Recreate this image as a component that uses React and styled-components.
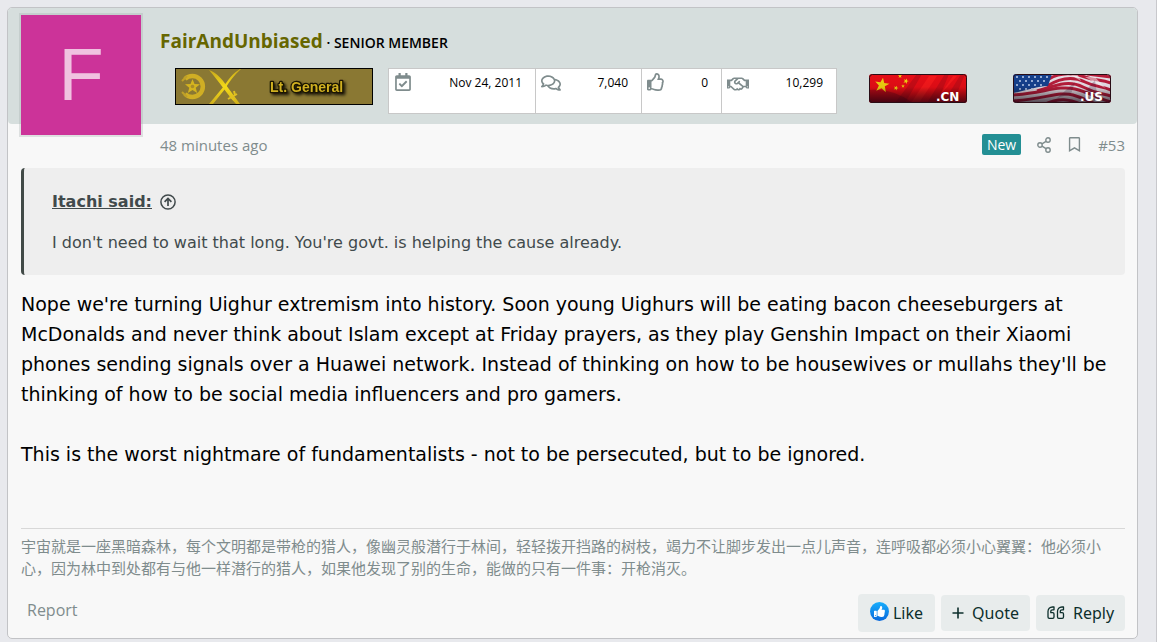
import React from "react";
import styled, { createGlobalStyle } from "styled-components";
import { FaRegCalendarCheck, FaRegComments, FaRegThumbsUp, FaRegHandshake, FaRegBookmark, FaThumbsUp } from "react-icons/fa";

const ui = '"Open Sans", "Noto Sans", sans-serif';
const verdana = 'Verdana, "DejaVu Sans", sans-serif';

const GlobalStyle = createGlobalStyle`
  * { box-sizing: border-box; }
  body { margin: 0; background: #e8e9ed; font-family: ${ui}; color: #000; }
  button { font: inherit; cursor: pointer; }
  a { color: inherit; text-decoration: none; }
  svg { display: block; flex: none; }
`;

const Page = styled.main`
  padding: 7px 18px 4px 7px;
  border-right: 1px solid #c8c8cc;
`;

const Post = styled.article`
  background: #f8f8f8;
  border: 1px solid #c2c3c6;
  border-radius: 5px;
`;

const Header = styled.header`
  display: flex;
  gap: 17px;
  height: 116px;
  padding: 5px 0 0 11px;
  background: #d6dedd;
  border-radius: 4px;
`;

const Avatar = styled.a`
  flex: none;
  width: 124px;
  height: 124px;
  border: 2px solid rgba(160, 170, 168, 0.3);
  background: #cc3399;
  background-clip: padding-box;
  color: #f0c2e0;
  text-align: center;
  font: 74px/120px "Liberation Sans", Arial, sans-serif;
`;

const Identity = styled.div`
  flex: 1;
  padding-top: 14px;
`;

const NameLine = styled.h4`
  margin: 0;
  font-size: 14px;
  line-height: 28px;
  font-weight: 600;
`;

const UserName = styled.a`
  color: #666600;
  font-size: 19px;
  font-weight: 700;
`;

const Details = styled.div`
  display: flex;
  align-items: flex-start;
  padding: 11px 0 0 15px;
`;

const Stats = styled.dl`
  display: flex;
  margin: 0 32px 0 15px;
  border: 1px solid #c8c8c8;
  background: #fff;
`;

const Stat = styled.div`
  display: flex;
  justify-content: space-between;
  width: ${(p) => p.$width}px;
  height: 44px;
  padding: 4px 13px 0 5px;
  border-left: ${(p) => (p.$first ? 0 : 1)}px solid #c8c8c8;
  color: #7f8c8d;
  dd { margin: 0; color: #000; font-size: 12px; line-height: 20px; }
`;

const Flags = styled.div`
  display: flex;
  gap: 46px;
  padding-top: 6px;
`;

const Meta = styled.div`
  display: flex;
  align-items: center;
  justify-content: space-between;
  height: 44px;
  padding: 0 12px 3px 152px;
  color: #7f8c8d;
  font-size: 15px;
`;

const MetaActions = styled.div`
  display: flex;
  align-items: center;
  gap: 16px;
`;

const NewTag = styled.span`
  padding: 0 5px;
  border-radius: 2px;
  background: #238f94;
  color: #fff;
  font-size: 14px;
  line-height: 21px;
`;

const Content = styled.div`
  padding: 0 12px 0 13px;
`;

const Quote = styled.blockquote`
  margin: 0;
  padding: 21px 28px 19px;
  border-left: 3px solid #414a47;
  border-radius: 4px;
  background: #eee;
  color: #414a4c;
  font: 16px/26px ${verdana};
  p { margin: 15px 0 0; }
`;

const QuoteSource = styled.a`
  display: flex;
  align-items: center;
  gap: 8px;
  font-weight: 700;
  span { text-decoration: underline; }
`;

const Body = styled.div`
  padding-top: 14px;
  font: 19px/30px ${verdana};
  p { margin: 0 0 30px; }
`;

const Signature = styled.aside`
  margin-top: 59px;
  padding-top: 6px;
  border-top: 1px solid #d8d8d8;
  color: #7f8c8d;
  font: 15px/22px "Noto Sans CJK SC", sans-serif;
`;

const Footer = styled.footer`
  display: flex;
  align-items: flex-start;
  justify-content: space-between;
  padding: 15px 12px 6px 19px;
  color: #7f8c8d;
  font-size: 16px;
  line-height: 32px;
`;

const Actions = styled.div`
  display: flex;
  align-items: center;
  gap: 6px;
`;

const Action = styled.button`
  display: flex;
  align-items: center;
  justify-content: center;
  gap: ${(p) => (p.$like ? 4 : 8)}px;
  width: ${(p) => (p.$like ? 77 : 89)}px;
  height: ${(p) => (p.$like ? 38 : 36)}px;
  padding: 0;
  border: 0;
  border-radius: 4px;
  background: #e8ecec;
  color: #0d2f2c;
  font: 16px/24px "Noto Sans", sans-serif;
`;

const LikeBadge = styled.span`
  display: flex;
  align-items: center;
  justify-content: center;
  width: 19px;
  height: 19px;
  margin-bottom: 4px;
  border-radius: 50%;
  background: linear-gradient(#18aefc, #0868dc);
  color: #fff;
`;

function RankBadge() {
  return (
    <svg width="198" height="37" viewBox="0 0 198 37" role="img" aria-label="Lt. General">
      <defs>
        <filter id="rankShadow" x="-20%" y="-50%" width="150%" height="220%">
          <feDropShadow dx="2" dy="2" stdDeviation="1.5" floodColor="#000" floodOpacity="0.8" />
        </filter>
        <linearGradient id="blade" x1="0" y1="0" x2="0" y2="1">
          <stop offset="0" stopColor="#c8a81c" /><stop offset="0.5" stopColor="#f4da18" /><stop offset="1" stopColor="#d0b01c" />
        </linearGradient>
      </defs>
      <rect x="0.5" y="0.5" width="197" height="36" fill="#8a7833" stroke="#000" />
      <path d="M10 11A10.500 10.500 0 1 1 10 26" fill="none" stroke="#cfae24" strokeWidth="4.500" />
      <path d="M7 13l5-5M7 24l5 5" stroke="#bfa028" strokeWidth="2" />
      <path d="M17.500 11l2 5 5.500.3-4.300 3.500 1.500 5.200-4.700-3-4.700 3 1.500-5.200-4.300-3.500 5.500-.3z" fill="#d4b41f" />
      <circle cx="17.500" cy="18.500" r="1.800" fill="#a88d28" />
      <path d="M34 2c8 3 13 9 17 15l14 19h-4C53 27 45 15 34 2z" fill="url(#blade)" />
      <path d="M65 1C58 5 53 12 49 18L34 36h4l12-15C54 14 59 7 66 1z" fill="url(#blade)" />
      <path d="M53 31l9-5M59 23l1 4M55 28l4 4" stroke="#e0c020" strokeWidth="2" />
      <text x="95" y="24" fill="#d0b020" stroke="#1a1500" strokeWidth="2.500" paintOrder="stroke" strokeLinejoin="round" filter="url(#rankShadow)" fontFamily='"Liberation Sans", Arial, sans-serif' fontWeight="700" fontSize="14">Lt. General</text>
    </svg>
  );
}

function FlagFrame({ id, label, children }) {
  return (
    <svg width="98" height="29" viewBox="0 0 98 29" role="img" aria-label={label}>
      <defs>
        <clipPath id={`${id}Clip`}><rect width="98" height="29" rx="3" /></clipPath>
        <linearGradient id={`${id}Shade`} x1="0" y1="0" x2="0" y2="1">
          <stop offset="0" stopColor="#000" stopOpacity="0" /><stop offset="0.45" stopColor="#000" stopOpacity="0.05" /><stop offset="1" stopColor="#100010" stopOpacity="0.7" />
        </linearGradient>
      </defs>
      <g clipPath={`url(#${id}Clip)`}>
        {children}
        <rect width="98" height="29" fill={`url(#${id}Shade)`} />
      </g>
      <rect x="0.5" y="0.5" width="97" height="28" rx="3" fill="none" stroke="#2a0d16" />
      <text x="67" y="27" fill="#fff" fontFamily='"DejaVu Sans", sans-serif' fontWeight="700" fontSize="12">{label}</text>
    </svg>
  );
}

const star = "M0-6l1.600 4H6L2.500.8 4 5.500 0 2.800-4 5.500-2.500.8-6-2h4.400z";

function ChinaFlag() {
  return (
    <FlagFrame id="cn" label=".CN">
      <rect width="98" height="29" fill="#e60d16" />
      <path d="M26 29L48 0h5L36 29zM58 29L76 0h4L68 29zM76 26L92 0h4L84 29z" fill="#900818" opacity="0.35" />
      <path d="M42 29L60 2h8L50 29zM70 22L84 2h4z" fill="#ff2020" opacity="0.6" />
      <path d="M0 16Q24 14 44 29H0z" fill="#700818" opacity="0.4" />
      <g fill="#efcf10">
        <path d={star} transform="translate(13 11) rotate(8) scale(1.200)" />
        <path d={star} transform="translate(31 2) scale(0.350)" />
        <path d={star} transform="translate(37 7) rotate(20) scale(0.450)" />
        <path d={star} transform="translate(34 12) scale(0.300)" />
        <path d={star} transform="translate(27 14) rotate(20) scale(0.400)" />
      </g>
    </FlagFrame>
  );
}

function UsFlag() {
  const rows = [0, 1, 2, 3];
  const cols = [0, 1, 2, 3, 4, 5];
  return (
    <FlagFrame id="us" label=".US">
      <rect width="98" height="29" fill="#e8dfe6" />
      <g fill="none" stroke="#b81c3a" strokeWidth="3">
        <path d="M36 5C48-2 62 -1 72 3S88 5 98 9" />
        <path d="M34 12C50 2 62 3 72 8S88 12 98 16" />
        <path d="M24 17C44 11 56 6 70 13S88 19 98 22" />
        <path d="M0 21C30 19 46 11 62 15S84 24 98 28" />
        <path d="M0 27C32 25 46 17 60 21S76 28 90 33" />
        <path d="M30 31C46 23 56 25 70 31" />
        <path d="M74 0C82 1 90 2 98 3" />
      </g>
      <path d="M56 0l12 7-4-7zM72 3l20 11-10-11z" fill="#fff" opacity="0.5" />
      <path d="M44 24L62 8l-4 12zM70 20L82 6l2 14z" fill="#401838" opacity="0.25" />
      <path d="M0 0h39l-4 12C24 12 12 17 0 19z" fill="#16418e" />
      <g fill="#c3d3ef">
        {rows.map((r) => cols.map((c) => (
          <circle key={`${r}-${c}`} cx={4 + c * 6 + (r % 2) * 3} cy={3 + r * 4} r={(r === 3 && c > 2) || (c === 5 && r > 0) ? 0 : 1} />
        )))}
      </g>
    </FlagFrame>
  );
}

function ShareIcon() {
  return (
    <svg width="14" height="16" viewBox="0 0 14 16" fill="none" stroke="currentColor" strokeWidth="1.400" aria-hidden="true">
      <circle cx="11" cy="3" r="2.200" /><circle cx="3" cy="8" r="2.200" /><circle cx="11" cy="13" r="2.200" />
      <path d="M5 6.900l4-2.600M5 9.100l4 2.600" />
    </svg>
  );
}

function CircleUpIcon() {
  return (
    <svg width="16" height="16" viewBox="0 0 16 16" fill="none" stroke="currentColor" strokeWidth="1.500" aria-hidden="true">
      <circle cx="8" cy="8" r="7.100" />
      <path d="M8 12V4.500M4.600 7.800L8 4.400l3.400 3.400" strokeWidth="1.700" />
    </svg>
  );
}

function PlusIcon() {
  return (
    <svg width="12" height="12" viewBox="0 0 12 12" stroke="currentColor" strokeWidth="1.600" aria-hidden="true">
      <path d="M0.500 6h11M6 0.500v11" />
    </svg>
  );
}

function QuoteIcon() {
  const mark = "M7 1H5.500C2.800 1 1 3 1 5.500V11c0 .8.500 1.300 1.300 1.300h3.400c.8 0 1.300-.5 1.300-1.300V8c0-.8-.5-1.300-1.300-1.300H3.800V5.500c0-1 .7-1.700 1.700-1.700H7z";
  return (
    <svg width="18" height="14" viewBox="0 0 18 14" fill="none" stroke="currentColor" strokeWidth="1.300" strokeLinejoin="round" aria-hidden="true">
      <path d={mark} /><path d={mark} transform="translate(9.500 0)" />
    </svg>
  );
}

export default function App() {
  return (
    <>
      <GlobalStyle />
      <Page>
        <Post>
          <Header>
            <Avatar href="#member">F</Avatar>
            <Identity>
              <NameLine><UserName href="#member">FairAndUnbiased</UserName> · SENIOR MEMBER</NameLine>
              <Details>
                <RankBadge />
                <Stats>
                  <Stat $width={146} $first><dt><FaRegCalendarCheck size={18} /></dt><dd>Nov 24, 2011</dd></Stat>
                  <Stat $width={106}><dt><FaRegComments size={20} /></dt><dd>7,040</dd></Stat>
                  <Stat $width={80}><dt><FaRegThumbsUp size={18} /></dt><dd>0</dd></Stat>
                  <Stat $width={115}><dt><FaRegHandshake size={22} /></dt><dd>10,299</dd></Stat>
                </Stats>
                <Flags><ChinaFlag /><UsFlag /></Flags>
              </Details>
            </Identity>
          </Header>
          <Meta>
            <time>48 minutes ago</time>
            <MetaActions>
              <NewTag>New</NewTag>
              <a href="#share" aria-label="Share"><ShareIcon /></a>
              <a href="#bookmark" aria-label="Bookmark"><FaRegBookmark size={15} /></a>
              <a href="#53">#53</a>
            </MetaActions>
          </Meta>
          <Content>
            <Quote>
              <QuoteSource href="#quoted"><span>Itachi said:</span><CircleUpIcon /></QuoteSource>
              <p>I don't need to wait that long. You're govt. is helping the cause already.</p>
            </Quote>
            <Body>
              <p>Nope we're turning Uighur extremism into history. Soon young Uighurs will be eating bacon cheeseburgers at McDonalds and never think about Islam except at Friday prayers, as they play Genshin Impact on their Xiaomi phones sending signals over a Huawei network. Instead of thinking on how to be housewives or mullahs they'll be thinking of how to be social media influencers and pro gamers.</p>
              <p>This is the worst nightmare of fundamentalists - not to be persecuted, but to be ignored.</p>
            </Body>
            <Signature lang="zh-CN">宇宙就是一座黑暗森林，每个文明都是带枪的猎人，像幽灵般潜行于林间，轻轻拨开挡路的树枝，竭力不让脚步发出一点儿声音，连呼吸都必须小心翼翼：他必须小心，因为林中到处都有与他一样潜行的猎人，如果他发现了别的生命，能做的只有一件事：开枪消灭。</Signature>
          </Content>
          <Footer>
            <a href="#report">Report</a>
            <Actions>
              <Action $like><LikeBadge><FaThumbsUp size={11} /></LikeBadge>Like</Action>
              <Action><PlusIcon />Quote</Action>
              <Action><QuoteIcon />Reply</Action>
            </Actions>
          </Footer>
        </Post>
      </Page>
    </>
  );
}
